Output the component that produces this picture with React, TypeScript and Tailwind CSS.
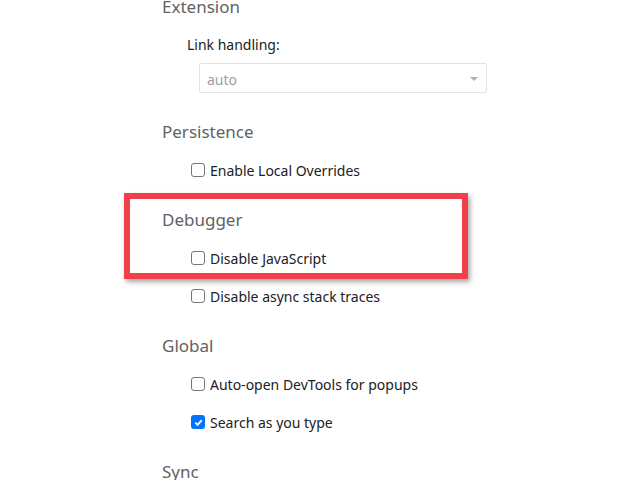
const font = { fontFamily: '"Noto Sans", "Open Sans", sans-serif' };

const Heading = ({ title, first }: { title: string; first?: boolean }) => (
  <div
    className={`flex h-[38px] items-center pl-[162px] text-[17px] text-[#626262] ${
      first ? '-mt-[12px]' : 'mt-[12px]'
    }`}
  >
    {title}
  </div>
);

const Item = ({ label, checked }: { label: string; checked?: boolean }) => (
  <label className="flex h-[38px] items-center pl-[191px] text-[14px] text-[#202124]">
    {checked ? (
      <span className="flex h-[14px] w-[14px] items-center justify-center rounded-[3px] bg-[#0075ff]">
        <svg width="11" height="11" viewBox="0 0 12 12">
          <path d="M2.5 6.2 L5 8.6 L9.6 3.4" fill="none" stroke="white" strokeWidth="2" />
        </svg>
      </span>
    ) : (
      <span className="h-[14px] w-[14px] rounded-[3px] border border-[#767676] bg-white" />
    )}
    <span className="ml-[5px]">{label}</span>
  </label>
);

export default function App() {
  return (
    <div className="relative h-[480px] w-[640px] overflow-hidden bg-white" style={font}>
      <Heading title="Extension" first />
      <div className="flex h-[36px] items-center pl-[187px] text-[14px] text-[#202124]">
        Link handling:
      </div>
      <div className="ml-[199px] mt-[1px] flex h-[30px] w-[288px] items-center justify-between rounded-[2px] border border-[#e3e3e3] bg-white pl-[7px] pr-[8px] pt-[2px] text-[14px] text-[#a0a0a0]">
        <span>auto</span>
        <svg width="8" height="5" viewBox="0 0 8 5">
          <path d="M0 0 L8 0 L4 4 Z" fill="#b0b0b0" />
        </svg>
      </div>
      <div className="h-[8px]" />
      <Heading title="Persistence" />
      <Item label="Enable Local Overrides" />
      <Heading title="Debugger" />
      <Item label="Disable JavaScript" />
      <Item label="Disable async stack traces" />
      <Heading title="Global" />
      <Item label="Auto-open DevTools for popups" />
      <Item label="Search as you type" checked />
      <Heading title="Sync" />

      <div className="absolute left-[124px] top-[193px] h-[86px] w-[344px] border-[6px] border-[#f2404a] shadow-[2px_3px_5px_rgba(0,0,0,0.35)]" />
    </div>
  );
}
